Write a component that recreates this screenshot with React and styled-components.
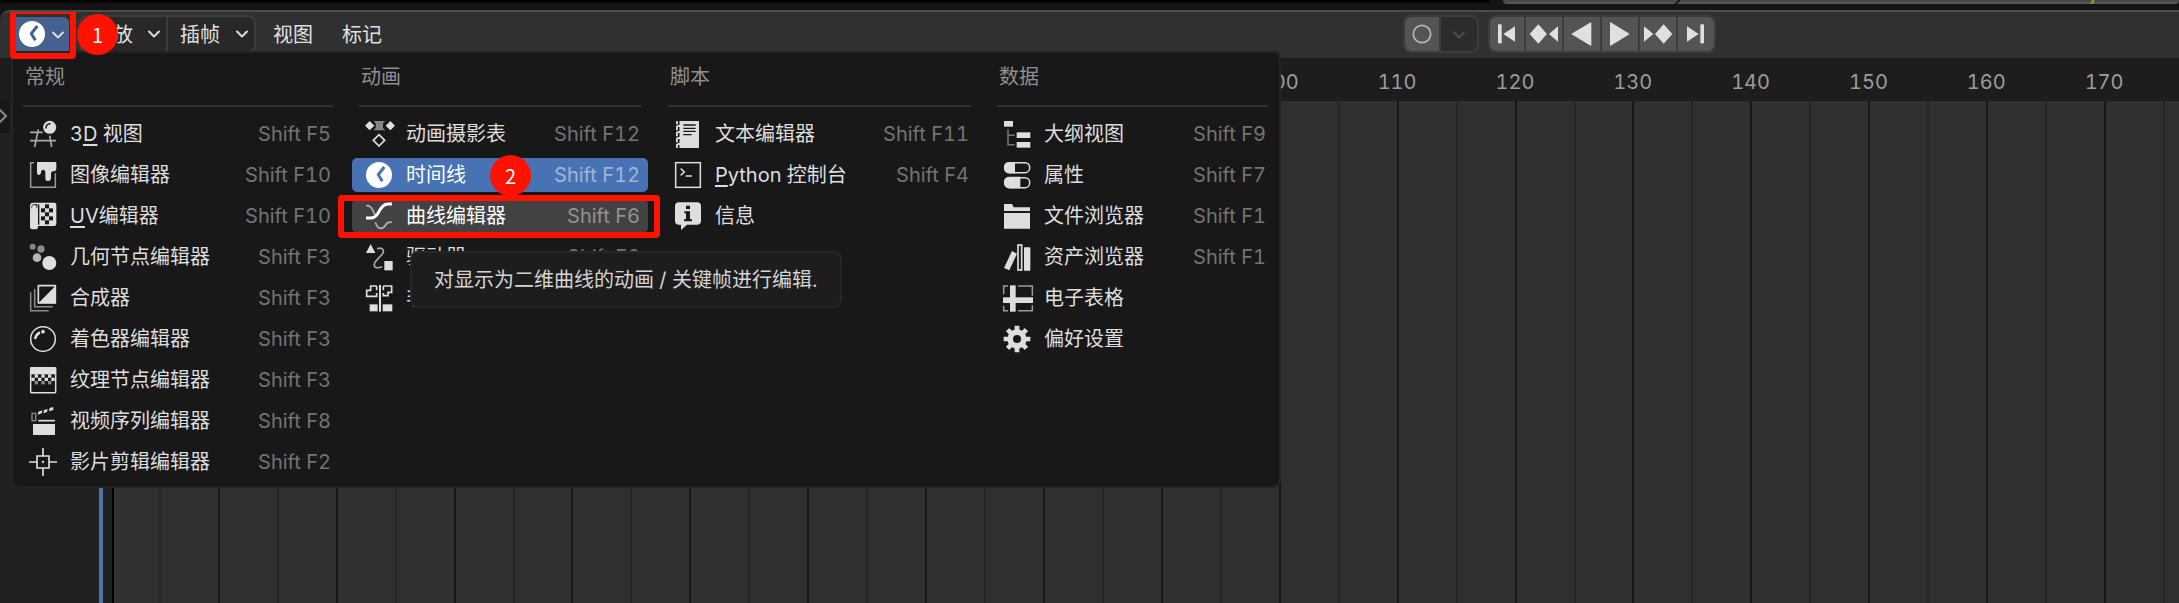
import React from 'react';
import styled, { createGlobalStyle, css } from 'styled-components';

const Global = createGlobalStyle`
  * { box-sizing: border-box; }
  body {
    margin: 0;
    background: #141414;
    font-family: Inter, "Noto Sans CJK SC", sans-serif;
    font-size: 20px;
    font-variant-numeric: tabular-nums;
    font-optical-sizing: none;
    overflow: hidden;
  }
  button { font: inherit; font-variant-numeric: inherit; font-optical-sizing: inherit; color: inherit; border: 0; margin: 0; padding: 0; background: none; cursor: pointer; }
`;

const INK = '#dedede';
const DIM = '#8f8f8f';
const BASE = '#181818';

/* ---------- page frame ---------- */

const Screen = styled.div`
  position: relative;
  display: flex;
  flex-direction: column;
  min-height: 100vh;
  background: #141414;
`;

const UpperEdge = styled.div`
  display: grid;
  grid-template-columns: 1490fr 676fr;
  gap: 13px;
  height: 10px;
`;

const UpperPanel = styled.div`
  display: grid;
  grid-template-columns: 170fr 415fr 91fr;
  height: 4px;
  background: ${(p) => (p.$light ? '#484848' : '#020202')};
  border-bottom: 2px solid ${(p) => (p.$light ? '#565656' : '#0c0c0c')};
  border-radius: 0 0 6px 6px;
`;

const WireEnd = styled.svg`
  display: block;
  width: 8px;
  height: 4px;
`;

const Editor = styled.main`
  flex: 1;
  display: flex;
  flex-direction: column;
  border-top: 2px solid #4b4b4b;
  border-radius: 10px 0 0 0;
  background: #303030;
  overflow: hidden;
`;

const Header = styled.header`
  display: flex;
  align-items: center;
  height: 46px;
  padding: 0 463px 2px 16px;
  color: #e0e0e0;
`;

const EditorSwitch = styled.div`
  position: relative;
`;

const EditorButton = styled.button`
  display: flex;
  align-items: center;
  width: 53px;
  height: 34px;
  padding-left: 1px;
  gap: 3px;
  border-radius: 0 6px 0 0;
  background: #44618f;
`;

const MenuGroup = styled.div`
  display: flex;
  height: 38px;
  margin-left: 10px;
  border: 2px solid #3d3d3d;
  border-radius: 8px;
  background: #282828;
`;

const MenuButton = styled.button`
  display: flex;
  align-items: center;
  justify-content: space-between;
  width: ${(p) => p.$width}px;
  padding: 0 4px 2px 12px;
  & + & { border-left: 2px solid #3d3d3d; }
`;

const PlainMenus = styled.nav`
  display: flex;
  gap: 29px;
  margin-left: 17px;
  padding-bottom: 2px;
`;

const Transport = styled.div`
  display: flex;
  gap: 9px;
  margin-left: auto;
`;

const TransportGroup = styled.div`
  display: flex;
  gap: 2px;
  height: 38px;
  border: 2px solid #3c3c3c;
  border-radius: 8px;
  background: #3c3c3c;
  overflow: hidden;
`;

const TransportButton = styled.button`
  display: flex;
  align-items: center;
  justify-content: center;
  width: 36px;
  background: ${(p) => (p.$quiet ? '#2c2c2c' : '#545454')};
  &:first-child { width: 34px; border-radius: 6px 0 0 6px; }
  &:last-child { border-radius: 0 6px 6px 0; }
`;

/* ---------- timeline ---------- */

const Ruler = styled.div`
  display: grid;
  grid-template-columns: 42px repeat(18, 1fr) 16px;
  align-items: center;
  height: 43px;
  padding-top: 4px;
  background: #1d1d1d;
`;

const FrameLabel = styled.span`
  grid-column: ${(p) => p.$column};
  text-align: center;
  line-height: 30px;
  color: #9c9c9c;
`;

const Track = styled.div`
  position: relative;
  flex: 1;
  display: grid;
  grid-template-columns: 41px repeat(36, 1fr) 16px;
  min-height: 300px;
`;

const Step = styled.div`
  border-left: ${(p) => (p.$edge ? '0' : '2px')} solid ${(p) => (p.$major ? '#171717' : '#262626')};
`;

const BeforeStart = styled.div`
  position: absolute;
  inset: 0 auto 0 0;
  width: 114px;
  border-right: 2px solid #000;
  background: #212121;
`;

const CurrentFrame = styled.div`
  position: absolute;
  inset: 0 auto 0 99px;
  width: 4px;
  background: #4d71a8;
`;

const SideHandle = styled.button`
  position: absolute;
  top: 99px;
  left: 0;
  display: flex;
  align-items: center;
  width: 10px;
  height: 34px;
  background: ${BASE};
`;

/* ---------- editor type menu ---------- */

const Popup = styled.div`
  position: absolute;
  top: 51px;
  left: 11px;
  display: flex;
  gap: 13px;
  padding: 9px 5px 7px 3px;
  border: 2px solid #242424;
  border-radius: 0 8px 8px 8px;
  background: ${BASE};
`;

const Column = styled.section`
  display: flex;
  flex-direction: column;
  gap: 7px;
  width: ${(p) => p.$width}px;
`;

const ColumnTitle = styled.h2`
  margin: 0 6px 3px 7px;
  padding: 0 2px 13px;
  border-bottom: 2px solid #2f2f2f;
  font-size: 20px;
  font-weight: 400;
  line-height: 30px;
  color: ${DIM};
`;

const Slot = styled.div`
  position: relative;
`;

const Item = styled.button`
  display: flex;
  align-items: center;
  gap: 12px;
  width: 100%;
  height: 34px;
  padding: 0 8px 0 12px;
  border-radius: 5px;
  line-height: 30px;
  color: ${INK};
  white-space: nowrap;
  ${(p) => p.$state === 'active' && css`background: #4772b3; color: #fff;`}
  ${(p) => p.$state === 'hover' && css`background: #424242; color: #fff;`}
`;

const Shortcut = styled.span`
  margin-left: auto;
  color: ${(p) => (p.$state === 'active' ? '#a3b5d3' : p.$state === 'hover' ? '#929292' : '#737373')};
`;

const Key = styled.span`
  text-decoration: underline;
  text-decoration-thickness: 2px;
  text-underline-offset: 3px;
`;

const Tooltip = styled.div`
  position: absolute;
  top: 251px;
  left: 410px;
  padding: 13px 23px 12px 22px;
  border: 2px solid #252525;
  border-radius: 8px;
  background: #1d1d1d;
  line-height: 28px;
  color: #d4d4d4;
  white-space: nowrap;
`;

/* ---------- annotations ---------- */

const Outline = styled.div`
  position: absolute;
  z-index: 2;
  inset: ${(p) => p.$inset};
  border: 6px solid #ff1200;
  border-radius: 4px;
  pointer-events: none;
`;

const Badge = styled.span`
  position: absolute;
  z-index: 3;
  top: -3px;
  left: ${(p) => p.$left}px;
  display: flex;
  align-items: center;
  justify-content: center;
  width: 41px;
  height: 41px;
  border-radius: 50%;
  background: #ff1200;
  color: #fff;
  font-family: "Noto Sans CJK SC", sans-serif;
`;

/* ---------- icons ---------- */

const Glyph = styled.svg`
  display: block;
  flex: none;
  width: 30px;
  height: 30px;
  overflow: visible;
`;

const Icon = ({ children }) => (
  <Glyph viewBox="0 0 90 90" fill="currentColor" aria-hidden="true">{children}</Glyph>
);

const ChevronGlyph = styled.svg`
  display: block;
  flex: none;
  width: 16px;
  height: 16px;
`;

const Chevron = ({ color = '#dcdcdc', side }) => (
  <ChevronGlyph viewBox="0 0 16 16" fill="none" stroke={color} strokeWidth="2" strokeLinecap="round" strokeLinejoin="round" aria-hidden="true">
    <path d={side ? 'M0 2 L6 8 L0 14' : 'M3 6.5 L8 11.5 L13 6.5'} />
  </ChevronGlyph>
);

const cells = (list, size, x, y) =>
  list.map(([c, r]) => <rect key={`${c}-${r}`} x={x + c * size} y={y + r * size} width={size} height={size} />);

const ICONS = {
  view3d: (
    <>
      <path d="M6 40H44M6 65H84M31 31L20 84M65 50L71 84" fill="none" stroke="#a8a8a8" strokeWidth="5" />
      <circle cx="65" cy="25" r="19.5" />
      <path d="M54 27Q54 15 66 14" fill="none" stroke={BASE} strokeWidth="4.5" strokeLinecap="round" />
    </>
  ),
  image: (
    <>
      <path d="M18 8H8V82H82V40" fill="none" stroke="#999" strokeWidth="4.5" />
      <path d="M27 6H82Q85 6 85 9V26Q84 34 77 34Q69 33 69 41V55Q68 63 60 63Q52 63 52 55V36Q51 29 45 29Q39 30 39 37V39Q37 45 32 45Q27 44 27 38Z" />
    </>
  ),
  uv: (
    <>
      <path d="M15 5H79Q85 5 85 11V69Q85 75 79 75H30V78Q30 85 22 85H13Q6 85 6 78V14Q6 5 15 5Z" />
      <path d="M12 24V19Q12 12 18 12Q26 12 26 20V22H28V10H16Q10 11 10 19Z" fill={BASE} />
      <rect x="30" y="10" width="4" height="61" fill={BASE} />
      <g fill={BASE}>{cells([[1, 0], [0, 1], [2, 1], [1, 2], [0, 3], [2, 3], [1, 4]], 12, 39, 10)}</g>
    </>
  ),
  geometry: (
    <>
      <circle cx="14" cy="14" r="9" fill="#858585" />
      <circle cx="39" cy="21" r="11" fill="#8c8c8c" />
      <circle cx="27" cy="47" r="13" fill="#b5b5b5" />
      <circle cx="64" cy="63" r="21" />
    </>
  ),
  compositor: (
    <>
      <path d="M8 28V83H62M20 18V71H74" fill="none" stroke="#8c8c8c" strokeWidth="4.5" />
      <rect x="31" y="8" width="51" height="52" fill={BASE} stroke="currentColor" strokeWidth="5" strokeLinejoin="round" />
      <path d="M83 8V61H31Z" />
    </>
  ),
  shader: (
    <>
      <circle cx="45" cy="45" r="37" fill="none" stroke="currentColor" strokeWidth="4.5" />
      <path d="M22 42Q24 32 33 27" fill="none" stroke="currentColor" strokeWidth="8" strokeLinecap="round" />
      <circle cx="45" cy="23" r="5.5" />
    </>
  ),
  texture: (
    <>
      <rect x="8" y="8" width="75" height="75" rx="2" fill="none" stroke="currentColor" strokeWidth="4.5" />
      <rect x="8" y="8" width="75" height="20" />
      {cells([[1, 0], [3, 0], [5, 0], [0, 1], [2, 1], [4, 1], [6, 1]], 10, 10, 28)}
      <g fill="#8c8c8c">{cells([[1, 2], [3, 2], [5, 2]], 10, 10, 28)}</g>
    </>
  ),
  sequencer: (
    <>
      <rect x="12" y="22" width="11" height="22" fill="none" stroke="#888" strokeWidth="4" />
      <path d="M31 17L43 13L41 22L29 26ZM48 12L59 9L57 18L46 22ZM65 6L76 3L76 12L63 16Z" />
      <path d="M31 44H81" stroke="currentColor" strokeWidth="5" />
      <rect x="15" y="54" width="66" height="33" />
    </>
  ),
  clip: (
    <>
      <path d="M27 27H63V63H27ZM45 3V27M45 63V87M3 45H27M63 45H87" fill="none" stroke="currentColor" strokeWidth="5" />
      <circle cx="45" cy="45" r="3.5" />
    </>
  ),
  dopesheet: (
    <>
      <path d="M28 6H64L57 13V27L64 34H28L35 27V13Z" fill="#858585" />
      <path d="M17 6L31 20L17 34L3 20ZM79 6L93 20L79 34L65 20Z" />
      <path d="M45 47L62 64L45 81L28 64Z" fill="none" stroke="currentColor" strokeWidth="5" />
    </>
  ),
  graph: (
    <>
      <path d="M6 14Q20 12 27 29Q30 38 36 42M34 64Q40 83 50 82Q60 81 65 72Q71 61 84 64" fill="none" stroke="#b0b0b0" strokeWidth="5" />
      <path d="M6 51H19Q34 51 43 35Q56 9 72 9H84" fill="none" stroke="currentColor" strokeWidth="9" />
    </>
  ),
  driver: (
    <>
      <path d="M39 20Q47 17 54 20Q62 26 55 36L34 59Q26 73 37 77Q46 78 54 74" fill="none" stroke="#aaa" strokeWidth="5" />
      <path d="M20 6L34 33H6Z" />
      <rect x="61" y="57" width="25" height="28" />
    </>
  ),
  nla: (
    <>
      <rect x="45" y="6" width="6" height="80" />
      <path d="M38 9H20V22H8V40H38V30M38 22V9M58 9H83V28H72V38H58V30M58 22V9" fill="none" stroke="currentColor" strokeWidth="5" />
      <rect x="17" y="64" width="24" height="21" />
      <rect x="56" y="64" width="29" height="21" />
    </>
  ),
  text: (
    <>
      <rect x="9" y="6" width="69" height="81" rx="2" />
      <g stroke={BASE} strokeWidth="4">
        <path d="M31 18H68M31 28H68M31 37H68M31 47H56" />
        <path d="M17 6V87" strokeWidth="5" strokeDasharray="12 6" />
        <path d="M9 18H14M9 36H14M9 54H14M9 72H14" />
      </g>
    </>
  ),
  console: (
    <>
      <rect x="8" y="8" width="74" height="74" fill="none" stroke="currentColor" strokeWidth="4.5" />
      <path d="M23 26L34 36L23 46M38 48H57" fill="none" stroke="currentColor" strokeWidth="4.5" />
    </>
  ),
  info: (
    <>
      <path d="M18 4H72Q84 4 84 16V59Q84 71 72 71H42L24 87V71H18Q6 71 6 59V16Q6 4 18 4Z" />
      <path d="M39 14H51V24H39ZM34 31H51V55H57V61H33V55H39V37H34Z" fill={BASE} />
    </>
  ),
  outliner: (
    <>
      <path d="M18 30V77H38M18 49H38" fill="none" stroke="#777" strokeWidth="4.5" />
      <rect x="6" y="6" width="27" height="17" />
      <rect x="44" y="40" width="41" height="17" />
      <rect x="44" y="69" width="41" height="17" />
    </>
  ),
  properties: (
    <>
      <rect x="8" y="8" width="75" height="30" rx="14" fill="none" stroke="currentColor" strokeWidth="4.5" />
      <path d="M39 6H22Q6 7 6 23Q6 39 22 40H39ZM55 50H22Q6 51 6 67Q6 83 22 85H55Z" />
      <rect x="8" y="53" width="75" height="30" rx="14" fill="none" stroke="currentColor" strokeWidth="4.5" />
    </>
  ),
  folder: <path d="M6 9H30L35 19H84V30H6ZM6 36H84V83H6Z" />,
  assets: (
    <>
      <path d="M30 27L45 35L22 85L6 78Z" />
      <rect x="48" y="9" width="11" height="75" fill="none" stroke="currentColor" strokeWidth="5" />
      <rect x="66" y="16" width="19" height="70" rx="2" />
    </>
  ),
  spreadsheet: (
    <>
      <path d="M18 9H5V34M48 9H91V38M5 68V83H18M48 83H91V66" fill="none" stroke="#999" strokeWidth="4.5" />
      <rect x="24" y="7" width="17" height="79" />
      <rect x="3" y="43" width="90" height="17" />
    </>
  ),
  preferences: (
    <>
      {[0, 45, 90, 135].map((a) => (
        <rect key={a} x="38" y="5" width="14" height="80" rx="2" transform={`rotate(${a} 45 45)`} />
      ))}
      <circle cx="45" cy="45" r="29" />
      <circle cx="45" cy="45" r="12" fill={BASE} />
    </>
  ),
};

const ClockIcon = ({ hand }) => (
  <Icon>
    <circle cx="45" cy="45" r="39" fill="#fff" />
    <path d="M61 21L43 44L55 64" fill="none" stroke={hand} strokeWidth="9" />
  </Icon>
);

const TRANSPORT = [
  ['跳到起点', <><rect x="18" y="16" width="11" height="57" /><path d="M34 45L69 22V68Z" /></>],
  ['上一关键帧', <><path d="M28 16L54 45L28 74L2 45ZM60 45L87 22V68Z" /></>],
  ['倒放', <path d="M16 45L71 12V78Z" stroke="currentColor" strokeWidth="4" strokeLinejoin="round" />],
  ['播放', <path d="M17 12L71 45L17 78Z" stroke="currentColor" strokeWidth="4" strokeLinejoin="round" />],
  ['下一关键帧', <><path d="M3 22L31 45L3 68ZM62 16L88 45L62 74L36 45Z" /></>],
  ['跳到终点', <><path d="M18 22L53 45L18 68Z" /><rect x="58" y="16" width="11" height="57" /></>],
];

/* ---------- data ---------- */

const COLUMNS = [
  {
    title: '常规',
    width: 323,
    items: [
      ['view3d', <>3<Key>D</Key> 视图</>, 'Shift F5'],
      ['image', '图像编辑器', 'Shift F10'],
      ['uv', <><Key>U</Key>V编辑器</>, 'Shift F10'],
      ['geometry', '几何节点编辑器', 'Shift F3'],
      ['compositor', '合成器', 'Shift F3'],
      ['shader', '着色器编辑器', 'Shift F3'],
      ['texture', '纹理节点编辑器', 'Shift F3'],
      ['sequencer', '视频序列编辑器', 'Shift F8'],
      ['clip', '影片剪辑编辑器', 'Shift F2'],
    ],
  },
  {
    title: '动画',
    width: 296,
    items: [
      ['dopesheet', '动画摄影表', 'Shift F12'],
      ['timeline', '时间线', 'Shift F12', 'active'],
      ['graph', '曲线编辑器', 'Shift F6', 'hover'],
      ['driver', '驱动器', 'Shift F6'],
      ['nla', '非线性动画', ''],
    ],
  },
  {
    title: '脚本',
    width: 316,
    items: [
      ['text', '文本编辑器', 'Shift F11'],
      ['console', <><Key>P</Key>ython 控制台</>, 'Shift F4'],
      ['info', '信息', ''],
    ],
  },
  {
    title: '数据',
    width: 284,
    items: [
      ['outliner', '大纲视图', 'Shift F9'],
      ['properties', '属性', 'Shift F7'],
      ['folder', '文件浏览器', 'Shift F1'],
      ['assets', '资产浏览器', 'Shift F1'],
      ['spreadsheet', '电子表格', ''],
      ['preferences', '偏好设置', ''],
    ],
  },
];

const LABELS = [100, 110, 120, 130, 140, 150, 160, 170];

export default function App() {
  return (
    <Screen>
      <Global />
      <UpperEdge>
        <UpperPanel />
        <UpperPanel $light>
          <span />
          <WireEnd viewBox="0 0 8 4" aria-hidden="true"><path d="M2 4L7 0" stroke="#0c0c0c" strokeWidth="1.5" /></WireEnd>
          <WireEnd viewBox="0 0 8 4" aria-hidden="true"><path d="M3 4L6 0" stroke="#6d9a3a" strokeWidth="3" /></WireEnd>
        </UpperPanel>
      </UpperEdge>

      <Editor>
        <Header>
          <EditorSwitch>
            <EditorButton aria-label="编辑器类型">
              <ClockIcon hand="#44618f" />
              <Chevron />
            </EditorButton>
            <Outline $inset="-9px -7px -8px -6px" />
            <Badge $left={61}>1</Badge>
          </EditorSwitch>
          <MenuGroup>
            <MenuButton $width={85}>播放<Chevron /></MenuButton>
            <MenuButton $width={88}>插帧<Chevron /></MenuButton>
          </MenuGroup>
          <PlainMenus>
            <button>视图</button>
            <button>标记</button>
          </PlainMenus>
          <Transport>
            <TransportGroup>
              <TransportButton aria-label="自动插帧">
                <Icon><circle cx="45" cy="45" r="26" fill="none" stroke="#b8b8b8" strokeWidth="5" /></Icon>
              </TransportButton>
              <TransportButton $quiet aria-label="自动插帧选项"><Chevron color="#4c4c4c" /></TransportButton>
            </TransportGroup>
            <TransportGroup>
              {TRANSPORT.map(([label, shape]) => (
                <TransportButton key={label} aria-label={label}><Icon>{shape}</Icon></TransportButton>
              ))}
            </TransportGroup>
          </Transport>
        </Header>

        <Ruler>
          {LABELS.map((n) => (
            <FrameLabel key={n} $column={n / 10 + 2}>{n}</FrameLabel>
          ))}
        </Ruler>
        <Track>
          <Step $edge />
          {Array.from({ length: 37 }, (_, i) => <Step key={i} $major={i % 2 === 1} />)}
          <BeforeStart />
          <CurrentFrame />
        </Track>
      </Editor>

      <SideHandle aria-label="展开侧栏"><Chevron side color="#8a8a8a" /></SideHandle>

      <Popup>
        {COLUMNS.map((col) => (
          <Column key={col.title} $width={col.width}>
            <ColumnTitle>{col.title}</ColumnTitle>
            {col.items.map(([icon, label, keys, state]) => (
              <Slot key={icon}>
                <Item $state={state}>
                  {icon === 'timeline' ? <ClockIcon hand="#4772b3" /> : <Icon>{ICONS[icon]}</Icon>}
                  <span>{label}</span>
                  {keys && <Shortcut $state={state}>{keys}</Shortcut>}
                </Item>
                {state === 'active' && <Badge $left={138}>2</Badge>}
                {state === 'hover' && <Outline $inset="-4px -12px -5px -14px" />}
              </Slot>
            ))}
          </Column>
        ))}
      </Popup>

      <Tooltip role="tooltip">对显示为二维曲线的动画 / 关键帧进行编辑.</Tooltip>
    </Screen>
  );
}
